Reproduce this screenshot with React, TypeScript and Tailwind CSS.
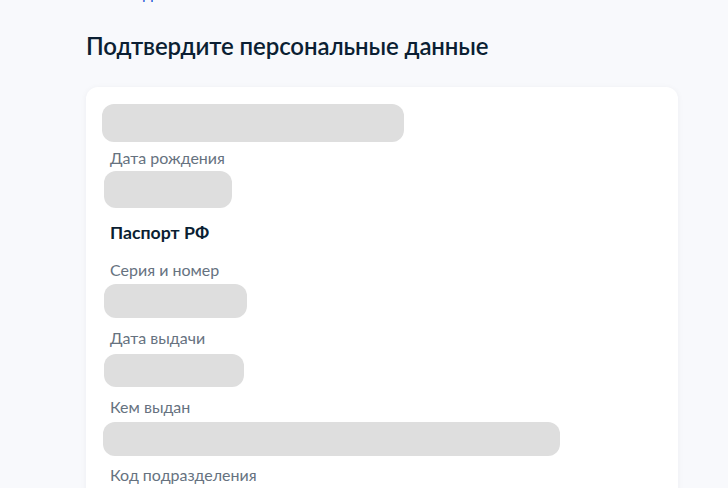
import React from "react";

const Blob = ({ className }: { className: string }) => (
  <div className={`rounded-[12px] bg-[#dedede] ${className}`} />
);

const Label = ({ children, className }: { children: React.ReactNode; className: string }) => (
  <div className={`text-[16px] leading-6 text-[#66727f] ${className}`}>{children}</div>
);

export default function App() {
  return (
    <div className="min-h-screen overflow-hidden bg-[#f8f9fc] font-['Lato','Noto_Sans',sans-serif]">
      <div className="pl-[86px]">
        <div className="-mt-[19px] flex h-6 items-center gap-1 text-[16px] leading-6 text-[#0d4cd3]">
          <svg width="8" height="14" viewBox="0 0 8 14" fill="none" className="ml-1">
            <path d="M7 1L1 7l6 6" stroke="currentColor" strokeWidth="1.6" strokeLinecap="round" strokeLinejoin="round" />
          </svg>
          <span className="ml-[6px]">Назад</span>
        </div>
        <h1 className="mt-[25px] text-[24px] font-semibold leading-8 tracking-[-0.1px] text-[#0b1f33]">
          Подтвердите персональные данные
        </h1>
        <div className="mt-[25px] w-[592px] rounded-xl bg-white px-6 pb-8 pt-[17px] shadow-[0_1px_6px_rgba(11,31,51,0.05)]">
          <Blob className="-ml-[8px] h-[38px] w-[302px]" />
          <Label className="mt-[4px]">Дата рождения</Label>
          <Blob className="-ml-[6px] mt-[1px] h-[37px] w-[128px]" />
          <div className="mt-[13px] text-[17.7px] font-bold leading-6 text-[#0b1f33]">Паспорт РФ</div>
          <Label className="mt-[13px]">Серия и номер</Label>
          <Blob className="-ml-[6px] mt-[2px] h-[34px] w-[143px]" />
          <Label className="mt-[8px]">Дата выдачи</Label>
          <Blob className="-ml-[6px] mt-[4px] h-[33px] w-[140px]" />
          <Label className="mt-[8px]">Кем выдан</Label>
          <Blob className="-ml-[7px] mt-[3px] h-[34px] w-[457px]" />
          <Label className="mt-[7px]">Код подразделения</Label>
          <Blob className="-ml-[6px] mt-[3px] h-[34px] w-[120px]" />
        </div>
      </div>
    </div>
  );
}
